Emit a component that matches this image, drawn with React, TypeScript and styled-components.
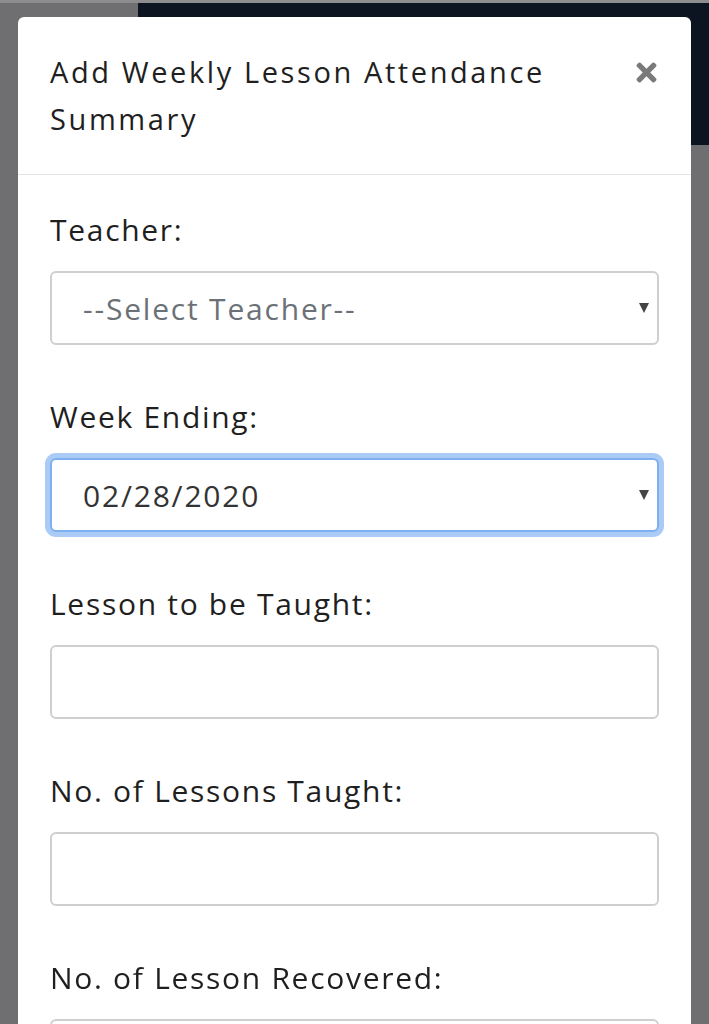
import styled, { createGlobalStyle } from "styled-components";
import { FaTimes } from "react-icons/fa";

const GlobalStyle = createGlobalStyle`
  html, body {
    margin: 0;
    padding: 0;
    background: #6f6f71;
  }
  * {
    box-sizing: border-box;
  }
`;

const Page = styled.div`
  min-height: 1024px;
  background: #6f6f71;
  display: flex;
  flex-direction: column;
`;

const TopLine = styled.div`
  height: 3px;
  background: #8d8d8f;
`;

const Header = styled.div`
  display: flex;
  height: 142px;
`;

const HeaderLeft = styled.div`
  width: 138px;
  background: #6f6f71;
`;

const HeaderRight = styled.div`
  flex: 1;
  background: #0d1421;
`;

const Modal = styled.div`
  position: fixed;
  left: 18px;
  top: 17px;
  width: 673px;
  height: 1020px;
  background: #fff;
  border-radius: 6px;
  font-family: "Open Sans", "Noto Sans", sans-serif;
  color: #1f1f1f;
`;

const ModalHeader = styled.div`
  display: flex;
  justify-content: space-between;
  align-items: flex-start;
  padding: 31px 32px 32px 32px;
  border-bottom: 1px solid #e4e4e4;
`;

const Title = styled.h4`
  margin: 0;
  font-size: 29px;
  font-weight: 400;
  line-height: 47px;
  width: 560px;
  letter-spacing: 2.6px;
`;

const Close = styled.button`
  border: 0;
  background: none;
  padding: 0;
  margin: 10px -2px 0 0;
  color: #7a7a7a;
  font-size: 29px;
  line-height: 1;
  display: flex;
`;

const Body = styled.div`
  padding: 35px 32px 32px 32px;
  display: flex;
  flex-direction: column;
`;

const Group = styled.div`
  display: flex;
  flex-direction: column;
  margin-bottom: 52px;
`;

const Label = styled.label`
  font-size: 30px;
  line-height: 40px;
  font-weight: 400;
  margin-bottom: 21px;
  letter-spacing: 1.7px;
`;

const SelectWrap = styled.div`
  position: relative;
`;

const Select = styled.select<{ $focused?: boolean; $placeholder?: boolean }>`
  appearance: none;
  -webkit-appearance: none;
  width: 100%;
  height: 74px;
  padding: 0 31px;
  font-family: inherit;
  font-size: 30px;
  letter-spacing: 1.8px;
  color: ${(p) => (p.$placeholder ? "#6b7177" : "#333")};
  background: #fff;
  border: 2px solid ${(p) => (p.$focused ? "#7eaff0" : "#cfcfcf")};
  border-radius: 6px;
  box-shadow: ${(p) => (p.$focused ? "0 0 0 5px #a9cbf6" : "none")};
  outline: none;
`;

const Caret = styled.span`
  position: absolute;
  right: 10px;
  top: 32px;
  width: 0;
  height: 0;
  border-left: 5px solid transparent;
  border-right: 5px solid transparent;
  border-top: 10px solid #444;
  pointer-events: none;
`;

const Input = styled.input`
  width: 100%;
  height: 74px;
  padding: 0 31px;
  font-family: inherit;
  font-size: 30px;
  border: 2px solid #cfcfcf;
  border-radius: 6px;
  background: #fff;
  outline: none;
`;

export default function App() {
  return (
    <>
      <GlobalStyle />
      <Page>
        <TopLine />
        <Header>
          <HeaderLeft />
          <HeaderRight />
        </Header>
      </Page>
      <Modal>
        <ModalHeader>
          <Title>Add Weekly Lesson Attendance Summary</Title>
          <Close aria-label="Close">
            <FaTimes />
          </Close>
        </ModalHeader>
        <Body>
          <Group>
            <Label>Teacher:</Label>
            <SelectWrap>
              <Select $placeholder defaultValue="">
                <option value="">--Select Teacher--</option>
              </Select>
              <Caret />
            </SelectWrap>
          </Group>
          <Group>
            <Label>Week Ending:</Label>
            <SelectWrap>
              <Select $focused defaultValue="2020-02-28">
                <option value="2020-02-28">02/28/2020</option>
              </Select>
              <Caret />
            </SelectWrap>
          </Group>
          <Group>
            <Label>Lesson to be Taught:</Label>
            <Input type="text" />
          </Group>
          <Group>
            <Label>No. of Lessons Taught:</Label>
            <Input type="text" />
          </Group>
          <Group>
            <Label>No. of Lesson Recovered:</Label>
            <Input type="text" />
          </Group>
        </Body>
      </Modal>
    </>
  );
}
